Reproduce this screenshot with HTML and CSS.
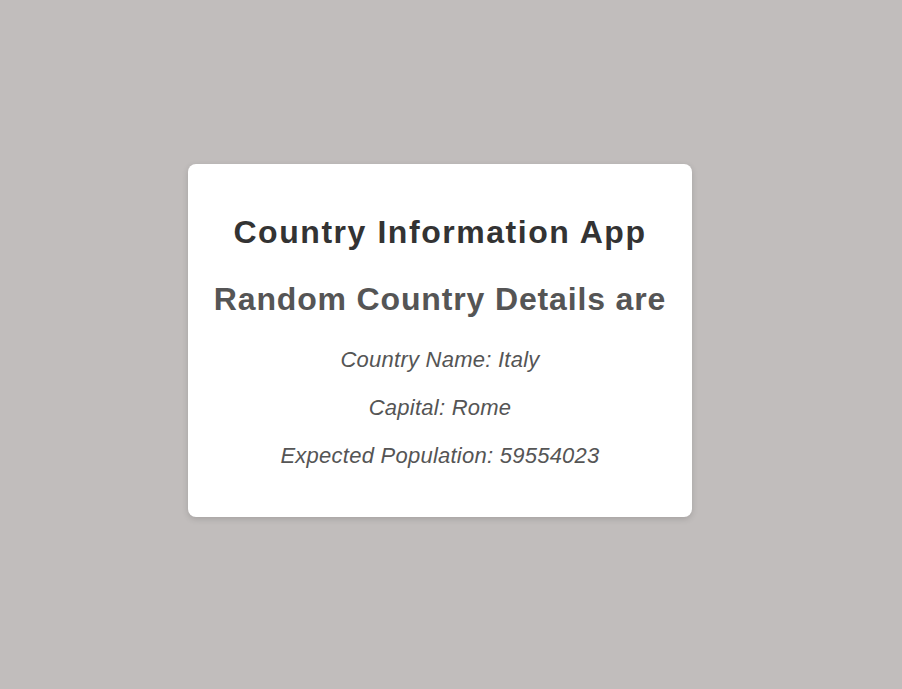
FILE: index.html
```html
<!DOCTYPE html>
<html lang="en">
<head>
<meta charset="utf-8">
<title>Country Information App</title>
<link rel="stylesheet" href="styles.css">
</head>
<body>
<main class="page">
  <section class="card">
    <h1 class="title">Country Information App</h1>
    <h2 class="subtitle">Random Country Details are</h2>
    <p class="detail">Country Name: Italy</p>
    <p class="detail">Capital: Rome</p>
    <p class="detail">Expected Population: 59554023</p>
  </section>
</main>
</body>
</html>
```

FILE: styles.css
```css
html, body {
  margin: 0;
  padding: 0;
}

body {
  background: #c1bdbc;
  font-family: "Liberation Sans", Arial, sans-serif;
}

.page {
  min-height: 689px;
  box-sizing: border-box;
  display: flex;
  align-items: center;
  justify-content: center;
  padding: 0 22px 8px 0;
}

.card {
  width: 504px;
  box-sizing: border-box;
  background: #ffffff;
  border-radius: 8px;
  box-shadow: 0 2px 6px rgba(0, 0, 0, 0.15);
  padding: 50px 10px 50px;
  text-align: center;
}

.title {
  margin: 0;
  font-size: 32px;
  font-weight: bold;
  color: #333333;
  line-height: 37px;
  letter-spacing: 1.55px;
}

.subtitle {
  margin: 30px 0 0;
  font-size: 32px;
  font-weight: bold;
  color: #555555;
  line-height: 37px;
  letter-spacing: 0.85px;
}

.detail {
  margin: 25px 0 0;
  font-size: 22px;
  font-style: italic;
  color: #555555;
  line-height: 23px;
  letter-spacing: 0.25px;
}

.subtitle + .detail {
  margin-top: 30px;
}
```
